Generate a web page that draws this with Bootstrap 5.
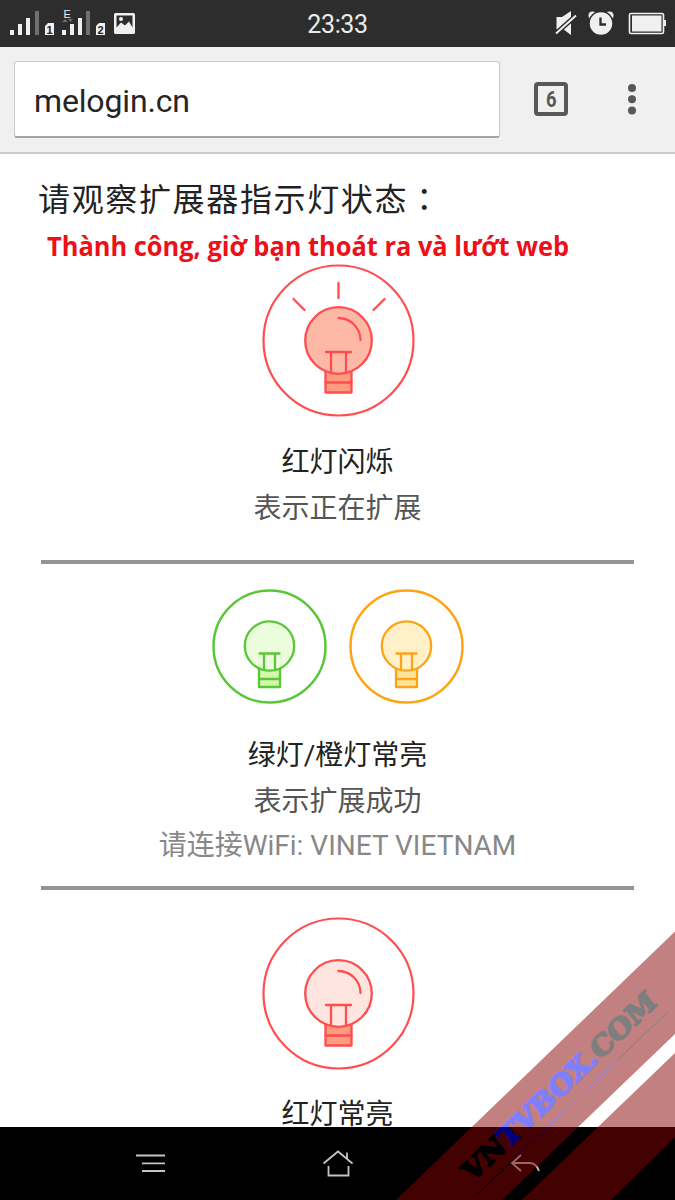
<!DOCTYPE html>
<html lang="zh-CN">
<head>
<meta charset="utf-8">
<meta name="viewport" content="width=device-width, initial-scale=1">
<title>melogin.cn</title>
<link href="https://cdn.jsdelivr.net/npm/bootstrap@5.3.0/dist/css/bootstrap.min.css" rel="stylesheet">
<style>
body{font-family:Roboto,"Noto Sans CJK SC",sans-serif;color:#222;background:#fff}
.phone{width:675px;height:1200px}
.status{height:47px;background:#2d2d2d;flex:none}
.clock{color:#ececec;font-size:25px;line-height:50px;height:47px;letter-spacing:-.4px;text-align:center}
.toolbar{height:107px;background:#f0f0f0;border-bottom:2px solid #c9c9c9;flex:none;padding:14px 36px 0 14px}
.address{width:486px;height:77px;background:#fff;border:1px solid #c8c8c8;border-bottom:2px solid #a5a5a5;border-radius:3px;font-size:32px;line-height:78px;padding-left:19px;color:#252525;letter-spacing:-.15px}
.tabs{width:34px;height:34px;border:4px solid #585858;border-radius:4px;margin-left:34px;margin-top:21px}
.dots{margin-left:59px;margin-top:22px}
.page-main{height:973px;flex:none}
.heading{font-size:32px;letter-spacing:1.65px;line-height:46px;margin:20px 0 0 38px}
.full-colon{font-family:"Noto Sans CJK TC",sans-serif}
.notice{margin-left:47px;height:40px}
.bulb-row{line-height:0}
.lamp-name{font-size:28px;line-height:46px;color:#222}
.lamp-note{font-size:28px;line-height:46px;color:#555}
.lamp-wifi{font-size:28px;line-height:42px;color:#888}
.rule{height:4px;background:#949494;margin:0 41px}
.lamp{color:#ff4d50;--base:#ff9b7e;margin-left:2px}
.blinking{--glass:#fdb9a6}
.steady{--glass:#ffe5df}
.green{color:#59c837;--base:#d5f7ac;--glass:#ebfddc}
.orange{color:#fda416;--base:#fee39b;--glass:#fff0c9}
.first-row{padding-top:1px}
.t1{margin-top:23px}.r1{margin-top:28px}
.pair{gap:22px;padding-top:25px}.t2{margin-top:29px}.r2{margin-top:19px}
.third{padding-top:27px}.t3{margin-top:22px}
.softkeys{height:73px;background:#000;flex:none}
.softkeys svg{display:block}
.ribbon{pointer-events:none}
</style>
</head>
<body>
<svg width="0" height="0" class="position-absolute">
  <defs>
    <g id="bulb" stroke="currentColor" stroke-width="2.3" stroke-linejoin="round" stroke-linecap="round">
      <path d="M63.500 107v21.500h26V107" fill="var(--base)"/>
      <circle cx="76.500" cy="76.500" r="33.300" fill="var(--glass)"/>
      <path d="M63.500 118.500h26M64 88h25M69 88v20M84 88v20" fill="none"/>
    </g>
    <g id="bulb-small" stroke="currentColor" stroke-width="2.3" stroke-linejoin="round" stroke-linecap="round">
      <path d="M47 79v19h21V79" fill="var(--base)"/>
      <circle cx="57.500" cy="57" r="24.700" fill="var(--glass)"/>
      <path d="M47 90h21M47.500 64.500h20M52 64.500v16M63 64.500v16" fill="none"/>
    </g>
  </defs>
</svg>
<div class="phone d-flex flex-column position-relative overflow-hidden">
  <header class="status position-relative">
    <svg class="position-absolute top-0 start-0" width="140" height="47" fill="#f0f0f0">
      <path d="M10 30h4v5h-4zM18 24h4v11h-4zM26 18h4v17h-4zM62 30h4v5h-4zM70 24h4v11h-4zM78 18h4v17h-4z"/>
      <path fill="#707070" d="M35 11h4v24h-4zM86 11h4v24h-4zM62 22l3-3 3 3zM68 19h5l-2.500 3z"/>
      <path d="M48 23h6v12h-9v-9zM99 23h6v12h-9v-9z"/>
      <g font-family="Liberation Sans" font-weight="bold"><text x="46.500" y="34" font-size="11" fill="#222">1</text><text x="97.500" y="34" font-size="11" fill="#222">2</text><text x="63.500" y="17.500" font-size="11" font-weight="normal">E</text></g>
      <rect x="114" y="13" width="21" height="21" rx="1.500"/>
      <path fill="#2d2d2d" d="M116.500 15.500h16v12l-3.500-6-4 4-4-3-4.500 5z"/>
      <circle cx="121" cy="19" r="2"/>
    </svg>
    <div class="clock">23:33</div>
    <svg class="position-absolute top-0 end-0" width="125" height="47" viewBox="550 0 125 47" fill="#f0f0f0">
      <path d="M556.500 17h5.500l9-6v24l-8-6h-6.500z"/>
      <path d="M556 33.500l20-18" stroke="#2d2d2d" stroke-width="5"/>
      <path d="M556 33.500l20-18" stroke="#f0f0f0" stroke-width="2"/>
      <circle cx="592.500" cy="15.500" r="4"/><circle cx="609.500" cy="15.500" r="4"/>
      <circle cx="601" cy="23.500" r="12" stroke="#2d2d2d" stroke-width="1.500"/>
      <path d="M600.500 17.500v7h5.500" fill="none" stroke="#2d2d2d" stroke-width="2.300"/>
      <rect x="629.500" y="13.500" width="34" height="20" rx="1.500" fill="none" stroke="#f0f0f0" stroke-width="1.600"/>
      <path d="M632 15.500h29.500v16H632zM664 20h2v6h-2z"/>
    </svg>
  </header>
  <div class="toolbar d-flex">
    <div class="address">melogin.cn</div>
    <div class="tabs"><svg width="26" height="26" class="d-block"><text x="8" y="20.500" font-family="Roboto" font-weight="bold" font-size="22" fill="#585858" textLength="10.500" lengthAdjust="spacingAndGlyphs">6</text></svg></div>
    <svg class="dots" width="10" height="32" fill="#585858"><circle cx="5" cy="5" r="4"/><circle cx="5" cy="16.300" r="4"/><circle cx="5" cy="27.500" r="4"/></svg>
  </div>
  <main class="page-main text-center overflow-hidden">
    <h1 class="heading text-start text-nowrap mb-0 fw-normal">请观察扩展器指示灯状态<span class="full-colon" lang="zh-TW">：</span></h1>
    <div class="notice" lang="vi"><svg width="560" height="40" class="d-block overflow-visible"><text x="0" y="32.500" font-family="Open Sans" font-weight="bold" font-size="26.500" fill="#ed1018" textLength="522" lengthAdjust="spacingAndGlyphs">Thành công, giờ bạn thoát ra và lướt web</text></svg></div>
    <section>
      <div class="bulb-row first-row"><svg class="lamp blinking" width="153" height="153">
        <circle cx="76.500" cy="76.500" r="75" fill="none" stroke="currentColor" stroke-width="2.200"/>
        <use href="#bulb"/>
        <path d="M76.500 19v15M31.500 35l11 11M122.500 35l-11 11M76.500 54c12 0 22 10 22 22" fill="none" stroke="currentColor" stroke-width="2.300" stroke-linecap="round"/>
      </svg></div>
      <div class="lamp-name t1">红灯闪烁</div>
      <div class="lamp-note">表示正在扩展</div>
    </section>
    <div class="rule r1"></div>
    <section>
      <div class="bulb-row d-flex justify-content-center pair">
        <svg class="green" width="115" height="115">
          <circle cx="57.500" cy="57.500" r="56" fill="none" stroke="currentColor" stroke-width="2.500"/><use href="#bulb-small"/>
        </svg>
        <svg class="orange" width="115" height="115">
          <circle cx="57.500" cy="57.500" r="56" fill="none" stroke="currentColor" stroke-width="2.500"/><use href="#bulb-small"/>
        </svg>
      </div>
      <div class="lamp-name t2">绿灯/橙灯常亮</div>
      <div class="lamp-note">表示扩展成功</div>
      <div class="lamp-wifi">请连接WiFi: VINET VIETNAM</div>
    </section>
    <div class="rule r2"></div>
    <section>
      <div class="bulb-row third"><svg class="lamp steady" width="153" height="153">
        <circle cx="76.500" cy="76.500" r="75" fill="none" stroke="currentColor" stroke-width="2.200"/>
        <use href="#bulb"/>
        <path d="M76.500 54c12 0 22 10 22 22" fill="none" stroke="currentColor" stroke-width="2.300" stroke-linecap="round"/>
      </svg></div>
      <div class="lamp-name t3">红灯常亮</div>
    </section>
  </main>
  <nav class="softkeys">
    <svg width="675" height="73" fill="none" stroke="#c4c4c4" stroke-width="1.800">
      <path d="M136 28.500h29M142 36.300h23M142 44h23"/>
      <path d="M323.500 36.500L338 24.500l14.500 12M347 32v-6.500M328.500 39v9.500h20V39"/>
      <path d="M521 28l-9 8 9 8M513 36h17q6 0 9 8"/>
    </svg>
  </nav>
  <svg class="ribbon position-absolute top-0 start-0" width="675" height="1200">
    <g opacity=".5">
      <path fill="#870303" d="M675 931.500V1034L502 1200H396zM675 1053v84l-64 63h-89z"/>
      <g transform="translate(472 1183) rotate(-43.800)">
        <text transform="skewX(-5)" x="0" y="0" font-family="DejaVu Serif" font-weight="bold" font-size="27" stroke-width="1.800" textLength="258" lengthAdjust="spacingAndGlyphs"><tspan fill="#000" stroke="#000">VN</tspan><tspan fill="#00f" stroke="#00f">TVBOX.</tspan><tspan fill="#000" stroke="#000">COM</tspan></text>
        <path d="M-3 12h54M190 12h70" stroke="#000" stroke-width=".8"/><path d="M51 12h139" stroke="#00f" stroke-width=".8"/>
      </g>
    </g>
  </svg>
</div>
<script src="https://cdn.jsdelivr.net/npm/bootstrap@5.3.0/dist/js/bootstrap.bundle.min.js"></script>
</body>
</html>
